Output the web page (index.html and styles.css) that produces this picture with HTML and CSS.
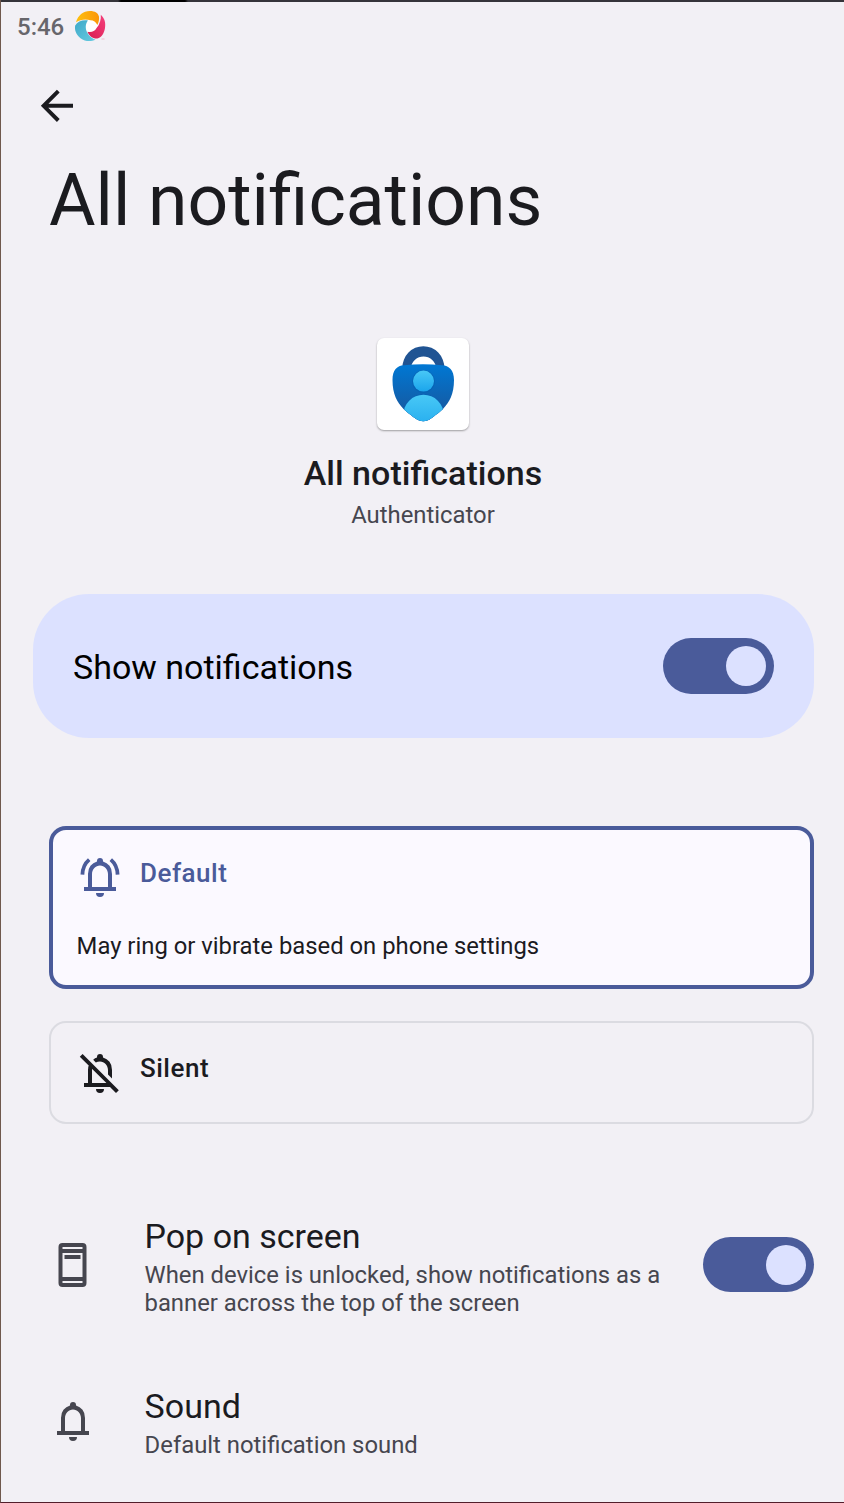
FILE: index.html
```html
<!DOCTYPE html>
<html lang="en">
<head>
<meta charset="utf-8">
<title>All notifications</title>
<link rel="stylesheet" href="styles.css">
</head>
<body>
<main class="screen">
  <header class="status">
    <span class="clock">5:46</span>
    <svg class="status-logo" viewBox="0 0 32 32">
      <defs>
        <linearGradient id="lo" x1="0" x2="1"><stop offset="0" stop-color="#fdc00f"/><stop offset="1" stop-color="#fb9608"/></linearGradient>
        <linearGradient id="lp" x1="1" y1="0" x2="0" y2="1"><stop offset="0" stop-color="#f5407c"/><stop offset="1" stop-color="#d81c50"/></linearGradient>
        <linearGradient id="lb" x1="0" x2="1" y2="1"><stop offset="0" stop-color="#3fa9c9"/><stop offset="1" stop-color="#66cbe0"/></linearGradient>
      </defs>
      <circle cx="17.500" cy="16" r="7.500" fill="#fff"/>
      <path fill="url(#lo)" d="M2 12.200C4 5.500 9 1 16 1c5 .1 8.300 2 9 5.700.3 3-.3 5.800-1.700 8.300C22 12 19.500 10.300 16.500 10.300 11.500 8.800 6.500 9.600 2 12.200z"/>
      <path fill="url(#lp)" d="M26.800 4.800C30.800 8.500 31.800 13 31 18c-.9 5.500-3.500 9.800-7.700 10.500-4.500.3-8-2.300-9.900-6.800 4.100.9 7.200-.3 9-3.500C25.800 14.500 27.300 9.500 26.800 4.800z"/>
      <path fill="url(#lb)" d="M14 10.500C11.200 14 11.200 18.500 13.200 22.500c1.800 3.400 4.700 5.900 8.300 7.200C17 31.900 11 31.600 6.500 28.200 2 24.800.3 19.500 1.200 15.500 3.500 11.500 8.500 9.800 14 10.500z"/>
      <path fill="none" stroke="#f5a3bb" stroke-width=".7" d="M27.500 29h3"/>
    </svg>
  </header>

  <svg class="back" viewBox="0 0 34 34"><path fill="none" stroke="#1b1b1f" stroke-width="3.900" d="M33 16.800H4M18.300 2.100 3.600 16.800l14.700 14.700"/></svg>

  <h1 class="title">All notifications</h1>

  <section class="app">
    <div class="app-icon">
      <svg viewBox="0 0 92 92">
        <defs>
          <linearGradient id="shield" x2="0" y2="1"><stop offset="0" stop-color="#0078d4"/><stop offset="1" stop-color="#1a5397"/></linearGradient>
          <linearGradient id="person" x2="0" y2="1"><stop offset="0" stop-color="#48c8f6"/><stop offset="1" stop-color="#1ba5ec"/></linearGradient>
          <clipPath id="clip"><path d="M15.500 42C15.500 32 20 27.500 27 27.200q19-1.700 38 0C72 27.500 77 32 77 42c0 14-4.500 22-11 29-5 4.500-8 6.500-12 9.500-5 3.500-10.500 3.500-15.500 0-4-3-7-5-12-9.500-6.500-7-11-15-11-29z"/></clipPath>
        </defs>
        <path d="M25.300 30A21 21.800 0 0 1 67.400 30H59.200A12.800 13 0 0 0 33.800 30z" fill="#205493"/>
        <g clip-path="url(#clip)">
          <path d="M15 26h63v58H15z" fill="url(#shield)"/>
          <circle cx="46.500" cy="43.500" r="11.300" fill="#0863b5"/>
          <circle cx="46.500" cy="43.100" r="10.500" fill="url(#person)"/>
          <circle cx="46.500" cy="76.300" r="20.200" fill="#0863b5"/>
          <circle cx="46.500" cy="77" r="20.200" fill="url(#person)"/>
        </g>
      </svg>
    </div>
    <h2 class="app-title">All notifications</h2>
    <p class="app-name">Authenticator</p>
  </section>

  <section class="main-switch">
    <span class="main-label">Show notifications</span>
    <span class="toggle"><span class="knob"></span></span>
  </section>

  <section class="option selected">
    <div class="option-head">
      <svg class="icon" viewBox="0 0 24 24"><path fill-rule="evenodd" d="M4 19V17H6V10.500Q6 7.925 7.250 6.400 8.500 4.900 10.500 4.300V4a1.500 1.500 0 0 1 3 0v.3q2 .6 3.250 2.100Q18 7.925 18 10.500V17h2v2zM14 20a2 2 0 0 1-4 0zM8 17h8v-6.500C16 8 14.200 6.200 12 6.200S8 8 8 10.500z"/><path fill="none" stroke="currentColor" stroke-width="1.900" d="M3.200 10.800C3.300 7.500 4.500 5.100 6.600 3.300M20.800 10.800C20.700 7.500 19.500 5.100 17.400 3.300"/></svg>
      <span class="option-name">Default</span>
    </div>
    <p class="option-text">May ring or vibrate based on phone settings</p>
  </section>

  <section class="option plain">
    <div class="option-head">
      <svg class="icon" viewBox="0 0 24 24"><path d="M4 19v-2h2v-6.500q0-1.600.55-2.900L8.200 9.200Q8 9.800 8 10.500V17h7.200L1.900 3.900l1.400-1.400 18.100 18.100-1.400 1.400-3-3zM14 20a2 2 0 0 1-4 0zM18 14.800l-2-2v-2.300C16 8 14.200 6.200 12 6.200q-1.200 0-2.100.5L8.600 5.400q.9-.8 1.900-1.100V4a1.500 1.500 0 0 1 3 0v.3q2 .6 3.250 2.100Q18 7.925 18 10.500z"/></svg>
      <span class="option-name">Silent</span>
    </div>
  </section>

  <section class="row">
    <svg class="phone" viewBox="0 0 30 46"><path fill-rule="evenodd" d="M4.500 1h20a4 4 0 0 1 4 4v36a4 4 0 0 1-4 4h-20a4 4 0 0 1-4-4V5a4 4 0 0 1 4-4zM4.500 5v2h20V5zM4.500 11v24h20V11zM4.500 39v2h20v-2zM6.500 13h16v4h-16z"/></svg>
    <div class="row-body">
      <h3 class="row-title">Pop on screen</h3>
      <p class="row-text">When device is unlocked, show notifications as a<br>banner across the top of the screen</p>
    </div>
    <span class="toggle"><span class="knob"></span></span>
  </section>

  <section class="row sound">
    <svg class="icon" viewBox="0 0 24 24"><path fill-rule="evenodd" d="M4 19V17H6V10.500Q6 7.925 7.250 6.400 8.500 4.900 10.500 4.300V4a1.500 1.500 0 0 1 3 0v.3q2 .6 3.250 2.100Q18 7.925 18 10.500V17h2v2zM14 20a2 2 0 0 1-4 0zM8 17h8v-6.500C16 8 14.200 6.200 12 6.200S8 8 8 10.500z"/></svg>
    <div class="row-body">
      <h3 class="row-title">Sound</h3>
      <p class="row-text">Default notification sound</p>
    </div>
  </section>
</main>
</body>
</html>
```
FILE: styles.css
```css
* { box-sizing: border-box; margin: 0; padding: 0; }
body {
  width: 844px;
  height: 1503px;
  overflow: hidden;
  background: #f2f0f5;
  font-family: Roboto, "Liberation Sans", sans-serif;
  font-feature-settings: "liga" 1;
  color: #1b1b1f;
}
svg { display: block; flex: none; }
h1, h2, h3 { font-weight: 400; }
.screen {
  display: flex;
  flex-direction: column;
  height: 1503px;
  border-left: 1px solid #6f584d;
  border-bottom: 1px solid #521e2b;
  background: linear-gradient(90deg, #35343a 117px, #000 120px, #000 184px, #35343a 187px) 0 0 / 100% 2px no-repeat;
}
.status { display: flex; align-items: center; height: 52px; padding-left: 16px; gap: 11px; }
.clock { width: 46px; font-size: 24px; font-weight: 500; color: #67666b; line-height: 32px; white-space: nowrap; margin-top: 2px; }
.status-logo { width: 32px; height: 32px; }
.back { width: 34px; height: 34px; margin: 37px 0 0 39px; }
.title { margin: 36px 0 0 48px; font-size: 71.400px; line-height: 84px; white-space: nowrap; }
.app { display: flex; flex-direction: column; align-items: center; margin-top: 95px; }
.app-icon { width: 92px; height: 92px; border-radius: 7px; background: #fff; box-shadow: 0 1px 2px rgba(0,0,0,.35); }
.app-title { margin: 23px 0 0 1px; font-size: 34px; font-weight: 500; line-height: 40px; letter-spacing: .03px; }
.app-name { margin: 8px 0 0 1px; font-size: 23.850px; line-height: 28px; color: #46464f; }
.main-switch {
  display: flex; align-items: center; justify-content: space-between;
  width: 781px; height: 144px; margin: 65px 0 0 32px; padding: 0 40px;
  border-radius: 56px; background: #dce1ff;
}
.main-label { margin-top: 2px; font-size: 34px; line-height: 40px; color: #000; }
.toggle {
  display: flex; align-items: center; justify-content: flex-end; flex: none;
  width: 111px; height: 55.500px; padding-right: 8px; border-radius: 28px; background: #4a5b9a;
}
.knob { width: 40px; height: 40px; border-radius: 50%; background: #dce1ff; }
.option { width: 765px; margin-left: 48px; border-radius: 17px; }
.option-head { display: flex; gap: 16px; }
.option-name { font-size: 26px; font-weight: 500; line-height: 30px; margin-top: 4px; letter-spacing: .5px; }
.icon { width: 48px; height: 48px; fill: currentColor; }
.selected { height: 163px; margin-top: 88px; padding: 24px 23px; border: 4px solid #4a5b9a; background: #fbf9ff; }
.selected .option-head { color: #4a5b9a; }
.selected .icon { margin-top: -1px; margin-bottom: 1px; }
.option-text { margin: 30px 0 0 .6px; font-size: 23.830px; line-height: 28px; }
.plain { height: 103px; margin-top: 32px; padding: 26px 25px; border: 2px solid #dbdbe1; }
.row { display: flex; align-items: center; height: 112px; margin: 85px 30px 0 57px; }
.row-body { flex: 1; padding-top: 3px; }
.phone { width: 30px; height: 46px; fill: #46464f; margin-right: 56.500px; }
.row .toggle { margin-top: -1px; }
.row-title { font-size: 34px; line-height: 40px; }
.row-text { margin-top: 4.500px; font-size: 23.850px; line-height: 28px; color: #46464f; white-space: nowrap; }
.sound { height: 76px; margin: 62px 30px 0 47.600px; }
.sound .icon { color: #46464f; margin-right: 48px; }
```
